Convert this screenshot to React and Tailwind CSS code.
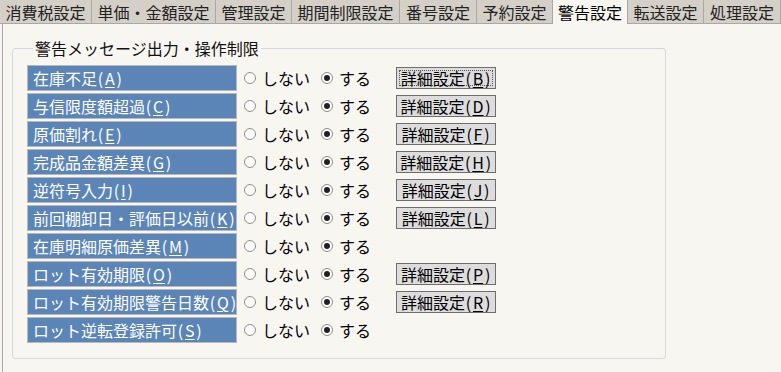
const tabs = [
  { name: "消費税設定", w: 92 },
  { name: "単価・金額設定", w: 124 },
  { name: "管理設定", w: 76 },
  { name: "期間制限設定", w: 108 },
  { name: "番号設定", w: 77 },
  { name: "予約設定", w: 76 },
  { name: "警告設定", w: 75, active: true },
  { name: "転送設定", w: 76 },
  { name: "処理設定", w: 77 },
];

const rows = [
  { label: "在庫不足", key: "A", btn: "B" },
  { label: "与信限度額超過", key: "C", btn: "D" },
  { label: "原価割れ", key: "E", btn: "F" },
  { label: "完成品金額差異", key: "G", btn: "H" },
  { label: "逆符号入力", key: "I", btn: "J" },
  { label: "前回棚卸日・評価日以前", key: "K", btn: "L" },
  { label: "在庫明細原価差異", key: "M" },
  { label: "ロット有効期限", key: "O", btn: "P" },
  { label: "ロット有効期限警告日数", key: "Q", btn: "R" },
  { label: "ロット逆転登録許可", key: "S" },
];

const Radio = ({ checked }) => (
  <span className="w-[12px] h-[12px] rounded-full border border-[#8c8c8c] bg-white flex items-center justify-center shrink-0">
    {checked && <span className="w-[6px] h-[6px] rounded-full bg-[#222]" />}
  </span>
);

// parens get a fixed cell so the part is about as wide as the original fixed font
const Key = ({ k }) => (
  <span className="inline-flex shrink-0 whitespace-nowrap">
    <span className="inline-block w-[7px] text-center">(</span>
    <span className="inline-block px-[1px] underline underline-offset-2">{k}</span>
    <span className="inline-block w-[7px] text-center">)</span>
  </span>
);

export default function App() {
  return (
    <div
      className="w-[781px] h-[372px] bg-[#f8f6f0] text-black overflow-hidden"
      style={{ fontFamily: '"Noto Sans CJK JP", "Noto Sans", sans-serif' }}
    >
      {/* tabs */}
      <div className="flex h-[24px]">
        {tabs.map((t) => (
          <div
            key={t.name}
            style={{ width: t.w }}
            className={
              t.active
                ? "h-[24px] bg-[#f8f6f0] border-r border-[#a8a8a8] flex items-center justify-center text-[16px] leading-none whitespace-nowrap"
                : "h-[24px] bg-[#d4d0c8] border-r border-b border-[#a8a8a8] flex items-center justify-center text-[16px] leading-none text-[#222] whitespace-nowrap"
            }
          >
            {t.name}
          </div>
        ))}
        <div className="flex-1 border-b border-[#a8a8a8]" />
      </div>

      {/* panel */}
      <div className="ml-[2px] h-[348px] border-l border-[#a8a8a8] pl-[9px] pt-[15px]">
        <fieldset className="w-[654px] border border-[#d3d7de] rounded-[3px] pl-[14px] pb-[15px] pt-[8px]">
          <legend className="ml-[6px] px-[2px] text-[16px] leading-[18px] text-[#111]">
            警告メッセージ出力・操作制限
          </legend>
          <div className="flex flex-col gap-[2px]">
            {rows.map((r, i) => (
              <div key={r.key} className="flex items-center h-[26px]">
                <div className="w-[210px] h-[26px] border border-[#b9b9b9] bg-[#5b85b7] text-white text-[16px] leading-none flex items-center pl-[5px] shrink-0 whitespace-nowrap overflow-hidden">
                  <span className="shrink-0">{r.label}</span>
                  <Key k={r.key} />
                </div>
                <div className="flex items-center ml-[7px] text-[16px] leading-none whitespace-nowrap">
                  <Radio />
                  <span className="ml-[6px] w-[59px]">しない</span>
                  <Radio checked />
                  <span className="ml-[6px]">する</span>
                </div>
                {r.btn && (
                  <div className="ml-[25px] w-[100px] h-[22px] border border-[#6e6e6e] bg-[#dddddd] p-[2px] shrink-0">
                    <div
                      className={
                        i === 0
                          ? "w-full h-full border border-dotted border-[#555] flex items-center justify-center text-[16px] leading-none whitespace-nowrap"
                          : "w-full h-full border border-transparent flex items-center justify-center text-[16px] leading-none whitespace-nowrap"
                      }
                    >
                      詳細設定
                      <Key k={r.btn} />
                    </div>
                  </div>
                )}
              </div>
            ))}
          </div>
        </fieldset>
      </div>
    </div>
  );
}
